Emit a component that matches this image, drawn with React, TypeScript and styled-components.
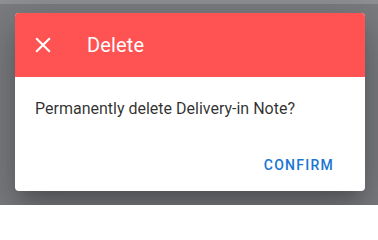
import React from 'react';
import styled, { createGlobalStyle } from 'styled-components';

const GlobalStyle = createGlobalStyle`
  html, body {
    margin: 0;
    padding: 0;
    width: 378px;
    height: 205px;
    overflow: hidden;
  }
  body {
    font-family: Roboto, 'Liberation Sans', sans-serif;
    -webkit-font-smoothing: antialiased;
  }
`;

const Backdrop = styled.div`
  width: 378px;
  height: 205px;
  background: #7b7c80;
  border-top: 4px solid #8f9094;
  box-sizing: border-box;
  padding: 9px 13px 0 15px;
`;

const Dialog = styled.div`
  width: 350px;
  height: 178px;
  background: #fff;
  border-radius: 4px;
  overflow: hidden;
  display: flex;
  flex-direction: column;
  box-shadow: 0 11px 15px -7px rgba(0, 0, 0, 0.2),
    0 24px 38px 3px rgba(0, 0, 0, 0.14), 0 9px 46px 8px rgba(0, 0, 0, 0.12);
`;

const Toolbar = styled.div`
  height: 64px;
  background: #ff5252;
  color: #fff;
  display: flex;
  align-items: center;
  padding: 0 16px 0 8px;
`;

const CloseButton = styled.button`
  width: 40px;
  height: 40px;
  margin-right: 24px;
  border: none;
  background: transparent;
  color: #fff;
  display: flex;
  align-items: center;
  justify-content: center;
  padding: 0;
  cursor: pointer;
`;

const Title = styled.div`
  font-size: 20px;
  font-weight: 400;
  letter-spacing: 0.15px;
  line-height: 1;
`;

const Body = styled.div`
  padding: 20px 20px 0 20px;
  font-size: 16px;
  line-height: 24px;
  color: rgba(0, 0, 0, 0.82);
`;

const Actions = styled.div`
  margin-top: auto;
  display: flex;
  justify-content: flex-end;
  padding: 0 8px 8px 8px;
`;

const TextButton = styled.button<{ $color?: string }>`
  height: 36px;
  padding: 0 23px 0 16px;
  border: none;
  background: transparent;
  color: ${({ $color }) => $color ?? '#1976d2'};
  font-family: Roboto, 'Liberation Sans', sans-serif;
  font-size: 14px;
  font-weight: 500;
  letter-spacing: 1.25px;
  text-transform: uppercase;
  cursor: pointer;
`;

function CloseIcon() {
  return (
    <svg width="26" height="26" viewBox="0 0 24 24" fill="currentColor">
      <path d="M19,6.41L17.59,5L12,10.59L6.41,5L5,6.41L10.59,12L5,17.59L6.41,19L12,13.41L17.59,19L19,17.59L13.41,12L19,6.41Z" />
    </svg>
  );
}

export default function App() {
  return (
    <>
      <GlobalStyle />
      <Backdrop>
        <Dialog>
          <Toolbar>
            <CloseButton aria-label="close">
              <CloseIcon />
            </CloseButton>
            <Title>Delete</Title>
          </Toolbar>
          <Body>Permanently delete Delivery-in Note?</Body>
          <Actions>
            <TextButton>Confirm</TextButton>
          </Actions>
        </Dialog>
      </Backdrop>
    </>
  );
}
